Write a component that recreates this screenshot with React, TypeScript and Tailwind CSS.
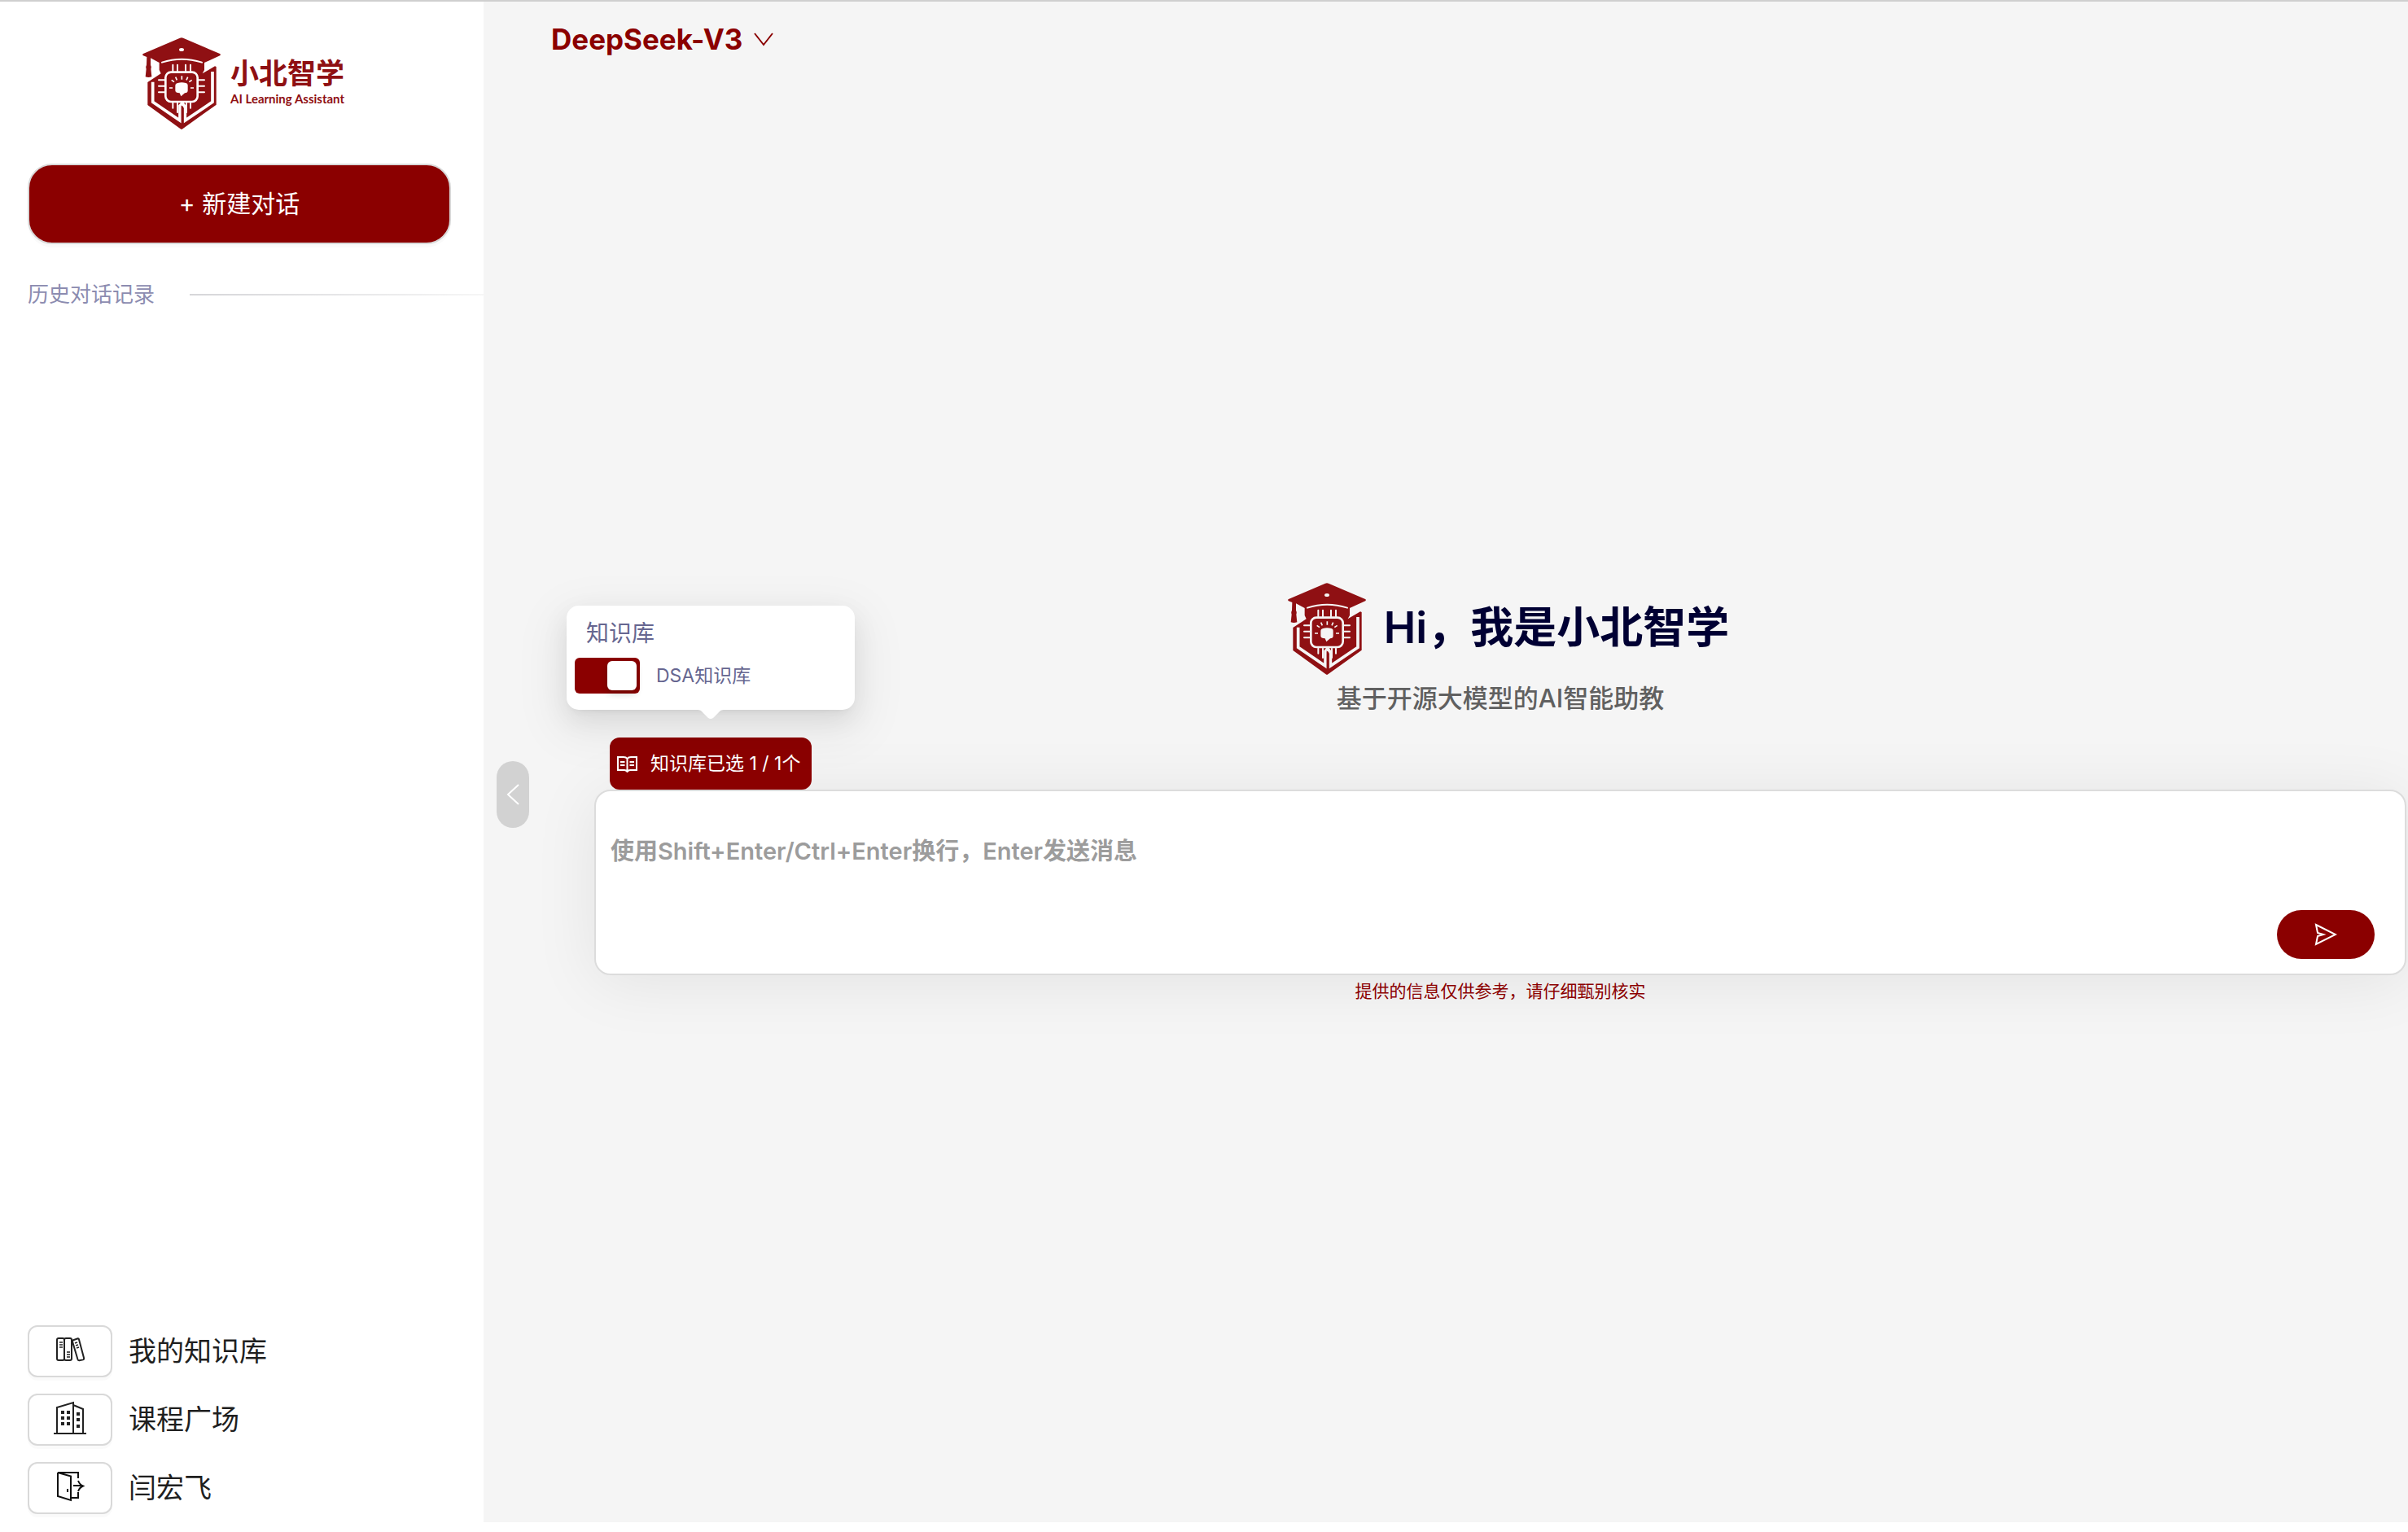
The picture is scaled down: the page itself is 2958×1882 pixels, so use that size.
import type { ReactNode } from "react";

const CJK = "font-['Inter','Noto_Sans_CJK_SC',sans-serif]";

function ShieldLogo() {
  return (
    <svg viewBox="0 0 360 390" className="h-[130px] w-[120px] shrink-0" aria-hidden="true">
      <path
        fill="#8f1013"
        d="M37 91 L174 32 Q180 29 186 32 L323 91 L323 96 L264 123 L264 150 L257 163 L303 136 L308 138 L308 278 L184 367 Q180 370 176 367 L55 279 L55 195 L104 163 L98 150 L98 123 L66 106 L66 132 Q70 138 67 146 L70 175 Q58 179 47 175 L50 146 Q47 138 51 132 L52 102 L37 96 Z"
      />
      <ellipse cx="180" cy="75" rx="9" ry="6" className="fill-current" />
      <g className="stroke-current" fill="none" strokeWidth="6" strokeLinecap="round">
        <path d="M108 122 Q180 98 255 122" />
        <path strokeLinecap="butt" strokeWidth="11" d="M74 194 V268 L174 336 V282 L182 274" />
        <path strokeLinecap="butt" strokeWidth="11" d="M294 156 V268 L193 336 V286 L180 268" />
        <path d="M148 131V154M165 131V154M195 131V154M213 131V154" />
        <path d="M148 272V290M165 272V306M213 272V290M198 272V306" />
        <path d="M96 187H118M96 209H118M96 232H118M242 187H264M242 209H264M242 232H264" />
      </g>
      <rect x="121" y="158" width="118" height="109" rx="20" fill="#8f1013" className="stroke-current" strokeWidth="8" />
      <path className="fill-current" d="M166 198 Q180 193 196 198 Q204 200 203 210 L203 226 Q203 235 192 235 L178 247 L173 235 Q157 235 157 226 L157 210 Q156 200 166 198 Z" />
      <path
        className="stroke-current"
        fill="none"
        strokeWidth="5"
        d="M135 216H147M213 216H225M143 187L153 194M158 176L163 187M181 172V185M203 176L198 187M218 187L208 194"
      />
      <path fill="#8f1013" d="M179 280 L188 292 V350 H179 Z" />
    </svg>
  );
}

function Books() {
  return (
    <svg viewBox="0 0 36 36" className="size-9" fill="none" stroke="#222" strokeWidth="2" aria-hidden="true">
      <rect x="2" y="4" width="9" height="27" rx="2" />
      <rect x="11" y="4" width="9" height="27" rx="2" />
      <path d="M21.500 6.500 L27 4.500 Q28.500 4 29 5.500 L35 28 Q35.400 30 34 30.400 L29.500 31.300 Q28 31.500 27.500 30 L21 8 Z" />
      <path strokeWidth="1.500" d="M5 9h4M5 12h4M5 15h4M14 21h4M14 24h4M14 27h4M24 10l3-1M25 13l3-1M26 16l3-1" />
    </svg>
  );
}

function Building() {
  return (
    <svg viewBox="0 0 40 42" className="h-[42px] w-10" fill="none" stroke="#222" strokeWidth="2" aria-hidden="true">
      <path d="M0 40H40M4 40V8L24 2V40M24 5L36 10V40" />
      <path fill="#222" stroke="none" d="M9 12h4v4H9zM16 12h4v4h-4zM9 19h4v4H9zM16 19h4v4h-4zM9 26h4v4H9zM16 26h4v4h-4zM28 14h4v4h-4zM28 21h4v4h-4zM28 29h4v4h-4z" />
    </svg>
  );
}

function Door() {
  return (
    <svg viewBox="0 0 36 38" className="h-[38px] w-9" fill="none" stroke="#111" strokeWidth="2" aria-hidden="true">
      <path d="M28 9V2H3L19 6.500V36L3 31V2M19 33H28V26M15 22V26" />
      <path d="M22 18H33M28 12Q30 17 34 18.500Q30 20 28 25" />
    </svg>
  );
}

function NavItem({ icon, label }: { icon: ReactNode; label: string }) {
  return (
    <button type="button" className="flex items-center gap-5 text-left">
      <span className="flex h-16 w-[104px] items-center justify-center rounded-xl border-2 border-[#d9d9d9] bg-white pb-1 shadow-[0_4px_0_rgba(0,0,0,0.02)]">
        {icon}
      </span>
      <span className="text-[34px] leading-10 text-[#1f1f1f]">{label}</span>
    </button>
  );
}

function Sidebar() {
  return (
    <aside className="flex w-[594px] shrink-0 flex-col bg-white pb-[22px]">
      <div className="flex justify-center pt-[34px] pr-2">
        <div className="flex items-center text-[#fffdfd]">
          <ShieldLogo />
          <div className="flex flex-col gap-1 font-['Lato','Noto_Sans_CJK_SC',sans-serif] text-[#8f1013]">
            <span className="text-[35px] leading-9 font-bold">小北智学</span>
            <span className="text-[15px] leading-5 font-bold">AI Learning Assistant</span>
          </div>
        </div>
      </div>
      <button
        type="button"
        className="mt-[35px] mr-10 ml-[34px] h-[99px] rounded-[30px] border-2 border-[#d9d9d9] bg-[#8b0000] text-[30px] text-white shadow-[0_4px_0_rgba(0,0,0,0.02)]"
      >
        + 新建对话
      </button>
      <div className="mt-11 flex items-center gap-[43px] pl-[34px]">
        <h2 className="text-[26px] leading-9 text-[#8c8cb0]">历史对话记录</h2>
        <div className="h-[2px] flex-1 bg-linear-to-r from-[#d6d6d9] to-[#f6f6f6]" />
      </div>
      <nav className="mt-auto flex flex-col gap-5 pl-[34px]">
        <NavItem icon={<Books />} label="我的知识库" />
        <NavItem icon={<Building />} label="课程广场" />
        <NavItem icon={<Door />} label="闫宏飞" />
      </nav>
    </aside>
  );
}

function KnowledgePopover() {
  return (
    <div className="absolute bottom-[98px] left-1/2 w-[354px] -translate-x-1/2 rounded-[15px] bg-white px-[10px] pt-4 pb-5 shadow-[0_12px_32px_rgba(0,0,0,0.08),0_6px_12px_-8px_rgba(0,0,0,0.12),0_18px_56px_16px_rgba(0,0,0,0.05)]">
      <p className="pl-[14px] text-[28px] leading-9 text-[#666690]">知识库</p>
      <label className="mt-3 flex items-center gap-5 text-[#666690]">
        <input type="checkbox" role="switch" defaultChecked className="peer sr-only" />
        <span className="flex h-11 w-20 justify-end rounded-md bg-[#8b0000] p-1">
          <span className="size-9 rounded-md bg-white shadow-[0_4px_8px_rgba(0,35,11,0.2)]" />
        </span>
        <span className="text-[23px] leading-9">DSA知识库</span>
      </label>
      <svg viewBox="0 0 32 12" className="absolute top-full left-1/2 h-3 w-8 -translate-x-1/2" aria-hidden="true">
        <path fill="#fff" d="M0 0 Q4 0 6 3 L13 10 Q16 12 19 10 L26 3 Q28 0 32 0 Z" />
      </svg>
    </div>
  );
}

function Composer() {
  return (
    <form className="flex w-full flex-col items-start" onSubmit={(e) => e.preventDefault()}>
      <div className="relative z-10 ml-[19px]">
        <KnowledgePopover />
        <button type="button" className="flex h-16 w-[248px] items-center gap-4 rounded-xl bg-[#8b0000] pl-[9px] text-[23px] whitespace-nowrap text-white">
          <svg viewBox="0 0 25 21" className="h-[21px] w-[25px]" fill="none" stroke="#fff" strokeWidth="2" aria-hidden="true">
            <path d="M1 2H8Q11 2 12.500 4Q14 2 17 2H24V18H16Q14 18 12.500 20Q11 18 9 18H1ZM12.500 4V19" />
            <path d="M4 8H9.500M4 12H9.500M15.500 8H21M15.500 12H21" />
          </svg>
          知识库已选 1 / 1个
        </button>
      </div>
      <div className="flex h-[228px] w-full items-end rounded-[20px] border-2 border-[#dcdcdc] bg-white pr-[37px] shadow-[0_8px_80px_rgba(0,0,0,0.08)]">
        <textarea
          aria-label="消息"
          placeholder="使用Shift+Enter/Ctrl+Enter换行，Enter发送消息"
          className="h-full flex-1 resize-none bg-transparent pt-[54px] pl-[18px] text-[29px] leading-10 font-semibold outline-none placeholder:text-[#9c9c9c]"
        />
        <button type="submit" aria-label="发送" className="mb-[18px] flex h-[60px] w-[120px] items-center justify-center rounded-full bg-[#8b0000]">
          <svg viewBox="0 0 28 28" className="size-7" fill="none" stroke="#fff" strokeWidth="2" aria-hidden="true">
            <path d="M2 2 L26 14 L2 26 L4 16 L11 14 L4 12 Z" />
          </svg>
        </button>
      </div>
    </form>
  );
}

export default function App() {
  return (
    <div className={`flex min-h-screen border-t-2 border-[#cfcfcf] bg-white text-black ${CJK}`}>
      <Sidebar />
      <main className="mb-3 flex min-w-0 flex-1 flex-col bg-[#f5f5f5]">
        <header className="flex h-[92px] items-center pl-[83px]">
          <button type="button" className="flex items-center gap-[14px] text-[35px] leading-10 font-bold text-[#8b0000]">
            DeepSeek-V3
            <svg viewBox="0 0 24 17" className="h-[17px] w-6" fill="none" stroke="#8b0000" strokeWidth="2" aria-hidden="true">
              <path d="M1 1 L12 15 L23 1" />
            </svg>
          </button>
        </header>
        <div className="flex flex-1 items-center pr-[2px] pb-6 pl-4">
          <button type="button" aria-label="收起侧栏" className="mt-3 flex h-[82px] w-10 shrink-0 items-center justify-center rounded-full bg-[#d2d2d2]">
            <svg viewBox="0 0 16 26" className="h-[26px] w-4" fill="none" stroke="#fff" strokeWidth="2" aria-hidden="true">
              <path d="M15 1 L2 13 L15 25" />
            </svg>
          </button>
          <section className="ml-20 flex min-w-0 flex-1 flex-col items-center">
            <div className="flex items-center gap-[10px] pl-2 text-[#f5f5f5]">
              <ShieldLogo />
              <h1 className="text-[53px] leading-[72px] font-semibold text-[#000033]">Hi，我是小北智学</h1>
            </div>
            <p className="mt-[2px] mb-7 text-[31px] leading-10 font-medium text-[#606060]">基于开源大模型的AI智能助教</p>
            <Composer />
            <p className="mt-1 text-[21px] leading-8 text-[#8b0000]">提供的信息仅供参考，请仔细甄别核实</p>
          </section>
        </div>
      </main>
    </div>
  );
}
